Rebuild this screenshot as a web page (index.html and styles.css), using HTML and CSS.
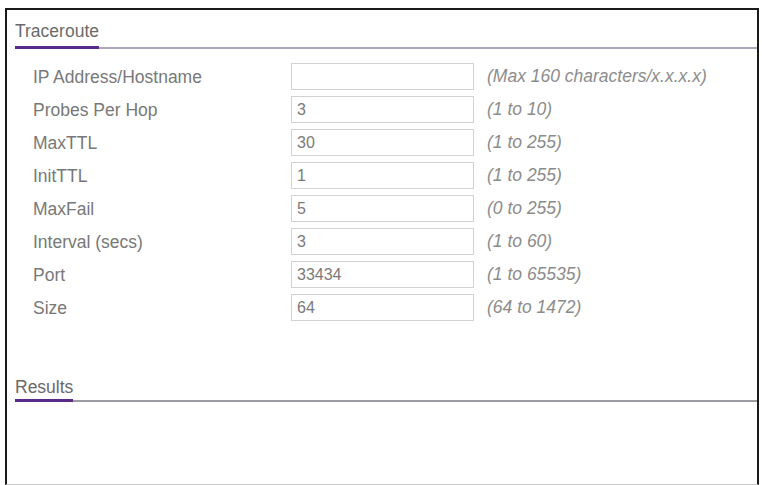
FILE: index.html
```html
<!doctype html>
<html lang="en">
    <head>
        <meta charset="UTF-8" />
        <title>Traceroute</title>
        <link rel="stylesheet" href="styles.css">
    </head>
    <body>
        <div class="panel">
            <h2 class="section-title"><span>Traceroute</span></h2>
            <form class="trace-form">
                <label for="host">IP Address/Hostname</label>
                <input id="host" type="text" value="">
                <span class="hint">(Max 160 characters/x.x.x.x)</span>

                <label for="probes">Probes Per Hop</label>
                <input id="probes" type="text" value="3">
                <span class="hint">(1 to 10)</span>

                <label for="maxttl">MaxTTL</label>
                <input id="maxttl" type="text" value="30">
                <span class="hint">(1 to 255)</span>

                <label for="initttl">InitTTL</label>
                <input id="initttl" type="text" value="1">
                <span class="hint">(1 to 255)</span>

                <label for="maxfail">MaxFail</label>
                <input id="maxfail" type="text" value="5">
                <span class="hint">(0 to 255)</span>

                <label for="interval">Interval (secs)</label>
                <input id="interval" type="text" value="3">
                <span class="hint">(1 to 60)</span>

                <label for="port">Port</label>
                <input id="port" type="text" value="33434">
                <span class="hint">(1 to 65535)</span>

                <label for="size">Size</label>
                <input id="size" type="text" value="64">
                <span class="hint">(64 to 1472)</span>
            </form>
            <h2 class="section-title section-title--results"><span>Results</span></h2>
        </div>
    </body>
</html>
```

FILE: styles.css
```css
:root {
    --frame-black: #1a1a1a;
    --title-purple: #5b2a88;
    --rule-gray: #aea7bc;
    --label-gray: #787878;
    --hint-gray: #8c8c8c;
    --field-border: #d2d2d2;
}

* {
    box-sizing: border-box;
}

body {
    margin: 0;
    background: #ffffff;
    font-family: "Liberation Sans", Arial, sans-serif;
    font-size: 17.5px;
    overflow: hidden;
}

.panel {
    height: 477px;
    margin: 8px 3px 0 5px;
    border: 2px solid var(--frame-black);
    border-bottom: 1px solid #c8c8c8;
}

/* title with a short purple bar sitting on a long thin rule */
.section-title {
    display: flex;
    margin: 0 0 0 8px;
    padding-top: 11px;
    border-bottom: 2px solid var(--rule-gray);
    font-size: 17.5px;
    font-weight: normal;
    line-height: 20px;
    color: #6a6a6a;
}

.section-title span {
    padding-bottom: 5px;
    margin-bottom: -2px;
    border-bottom: 3px solid var(--title-purple);
}

.section-title--results {
    margin-top: 56px;
    padding-top: 0;
    border-bottom-color: #9c9ba2;
}

.section-title--results span {
    padding-bottom: 2px;
}

.trace-form {
    display: grid;
    grid-template-columns: 258px 183px auto;
    grid-auto-rows: 27px;
    row-gap: 6px;
    column-gap: 0;
    align-items: center;
    margin-top: 14px;
    padding-left: 26px;
}

.trace-form label {
    color: var(--label-gray);
    line-height: 20px;
}

.trace-form input {
    width: 183px;
    height: 27px;
    margin: 0;
    padding: 0 5px;
    border: 1px solid var(--field-border);
    background: #ffffff;
    font-family: "Liberation Sans", Arial, sans-serif;
    font-size: 16px;
    color: #7a7a7a;
    outline: none;
}

.hint {
    padding-left: 13px;
    font-style: italic;
    color: var(--hint-gray);
    white-space: nowrap;
}
```
